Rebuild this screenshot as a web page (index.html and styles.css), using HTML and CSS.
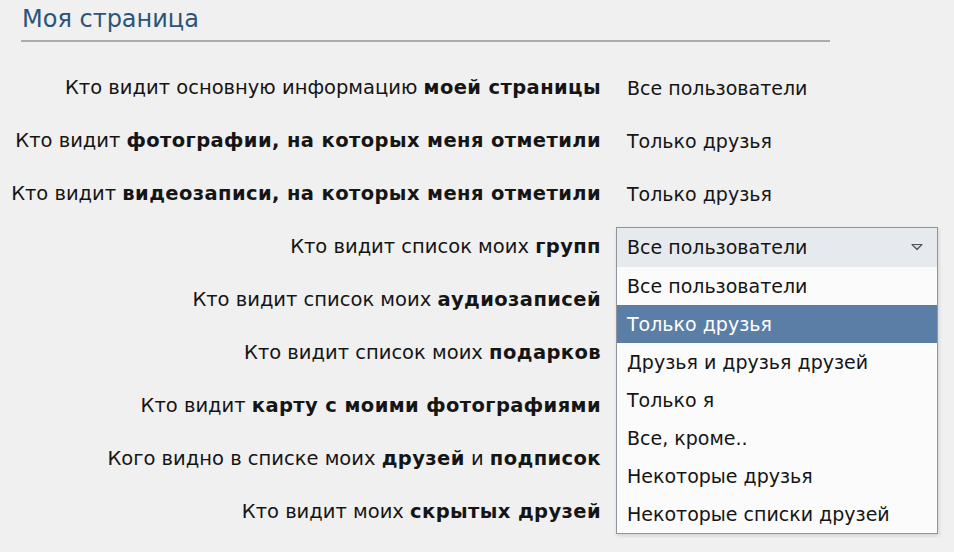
FILE: index.html
```html
<!DOCTYPE html>
<html lang="ru">
<head>
  <meta charset="UTF-8" />
  <title>Моя страница</title>
  <link rel="stylesheet" href="styles.css">
</head>
<body>
  <div class="razdel">
    <h2 class="razdel-titulo">Моя страница</h2>

    <div class="privacidade">
      <div class="rotulo">Кто видит основную информацию <b>моей страницы</b></div>
      <div class="valor">Все пользователи</div>

      <div class="rotulo">Кто видит <b>фотографии, на которых меня отметили</b></div>
      <div class="valor">Только друзья</div>

      <div class="rotulo">Кто видит <b>видеозаписи, на которых меня отметили</b></div>
      <div class="valor">Только друзья</div>

      <div class="rotulo">Кто видит список моих <b>групп</b></div>
      <div class="valor">
        <div class="lista">
          <div class="lista-topo">
            Все пользователи
            <svg class="seta" width="12" height="8" viewBox="0 0 12 8">
              <path d="M1 1.5 L11 1.5 L6 6.5 Z" fill="#d8dbe0" stroke="#555" stroke-width="1.2" stroke-linejoin="round"/>
            </svg>
          </div>
          <div class="opcao">Все пользователи</div>
          <div class="opcao ativa">Только друзья</div>
          <div class="opcao">Друзья и друзья друзей</div>
          <div class="opcao">Только я</div>
          <div class="opcao">Все, кроме..</div>
          <div class="opcao">Некоторые друзья</div>
          <div class="opcao">Некоторые списки друзей</div>
        </div>
      </div>

      <div class="rotulo">Кто видит список моих <b>аудиозаписей</b></div>
      <div class="valor"></div>

      <div class="rotulo">Кто видит список моих <b>подарков</b></div>
      <div class="valor"></div>

      <div class="rotulo">Кто видит <b>карту с моими фотографиями</b></div>
      <div class="valor"></div>

      <div class="rotulo">Кого видно в списке моих <b>друзей</b> и <b>подписок</b></div>
      <div class="valor"></div>

      <div class="rotulo">Кто видит моих <b>скрытых друзей</b></div>
      <div class="valor"></div>
    </div>
  </div>
</body>
</html>
```

FILE: styles.css
```css
body {
  margin: 0;
  background: #f0f0f0;
  color: #151515;
  font-family: 'DejaVu Sans', Tahoma, sans-serif;
  font-size: 19.5px;
}
.razdel {
  padding: 5px 0 0 0;
}
.razdel-titulo {
  margin: 0 124px 0 21px;
  padding: 0 0 7px 1px;
  font-size: 24px;
  font-weight: normal;
  color: #2b5478;
  border-bottom: 2px solid #a8acb0;
}
.privacidade {
  display: grid;
  grid-template-columns: 601px 1fr;
  grid-auto-rows: 53px;
  column-gap: 26px;
  align-items: center;
  margin-top: 19px;
}
.rotulo {
  text-align: right;
  white-space: nowrap;
}
.rotulo b {
  font-weight: bold;
  letter-spacing: 0.4px;
}
.valor {
  position: relative;
  white-space: nowrap;
  font-size: 19px;
}
.lista {
  position: absolute;
  left: -11px;
  top: -20px;
  width: 320px;
  border: 1px solid #8e959c;
  background: #fbfbfb;
  box-shadow: 1px 2px 4px rgba(0, 0, 0, 0.12);
  z-index: 2;
}
.lista-topo {
  display: flex;
  justify-content: space-between;
  align-items: center;
  height: 39px;
  padding: 0 14px 0 10px;
  background: #e6e9ed;
}
.opcao {
  height: 38px;
  line-height: 38px;
  padding-left: 10px;
}
.opcao.ativa {
  background: #5b7ea6;
  color: #fff;
}
```
